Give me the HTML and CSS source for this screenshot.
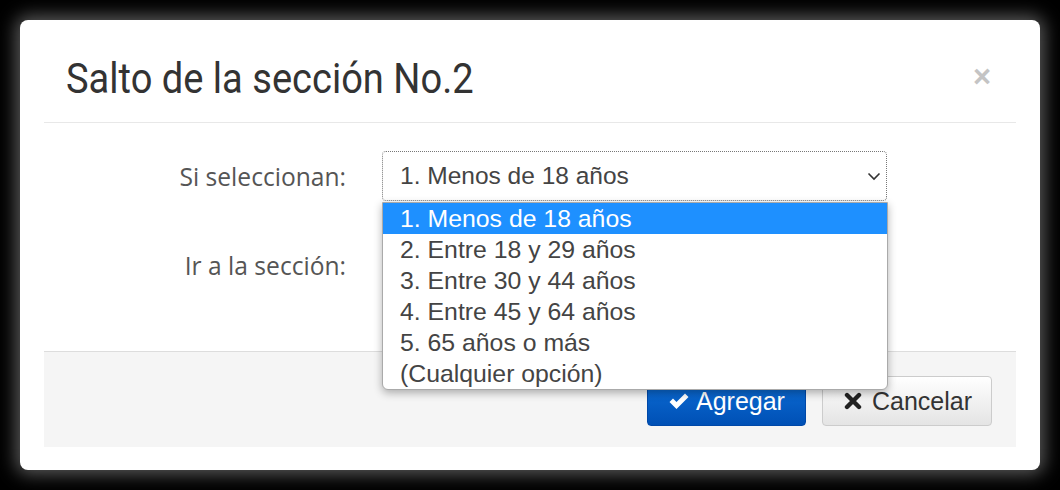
FILE: index.html
```html
<!DOCTYPE html>
<html>
	<head>
		<meta charset="UTF-8">
		<title>Salto de la sección</title>
		<link rel="stylesheet" href="styles.css">
	</head>
	<body>

		<div class="modal">

			<!--cabecera-->
			<div class="modal-header">
				<h4 class="modal-title"><span>Salto de la sección No.2</span></h4>
				<span class="close">&times;</span>
			</div>

			<!--formulario-->
			<div class="modal-body">
				<div class="form-row">
					<label class="form-label">Si seleccionan:</label>
					<div class="form-ctrl">
						<div class="select focused">
							<span>1. Menos de 18 años</span>
							<svg class="chev" width="14" height="10" viewBox="0 0 14 10"><path d="M1.5 2.5 L7 8 L12.5 2.5" fill="none" stroke="#333" stroke-width="1.6"/></svg>
						</div>

						<!--lista desplegada-->
						<ul class="options">
							<li class="active">1. Menos de 18 años</li>
							<li>2. Entre 18 y 29 años</li>
							<li>3. Entre 30 y 44 años</li>
							<li>4. Entre 45 y 64 años</li>
							<li>5. 65 años o más</li>
							<li>(Cualquier opción)</li>
						</ul>
					</div>
				</div>
				<div class="form-row">
					<label class="form-label">Ir a la sección:</label>
					<div class="form-ctrl">
						<!--queda debajo de la lista-->
						<div class="select"></div>
					</div>
				</div>
			</div>

			<!--botones-->
			<div class="modal-footer">
				<a class="btn btn-primary" href="javascript:;">
					<svg width="22" height="20" viewBox="0 0 22 20"><path d="M1.5 11 L5 7.5 L8.5 11 L17 2.5 L20.5 6 L8.5 18 Z" fill="#fff"/></svg>
					Agregar
				</a>
				<a class="btn btn-default" href="javascript:;">
					<svg width="18" height="18" viewBox="0 0 18 18"><path d="M3 3 L15 15 M15 3 L3 15" stroke="#222" stroke-width="4.4" stroke-linecap="round"/></svg>
					Cancelar
				</a>
			</div>

		</div>

	</body>
</html>
```

FILE: styles.css
```css
*{
	margin: 0;
	padding: 0;
	box-sizing: border-box;
}

body{
	background-color: #000;
	padding: 20px;
	width: 1060px;
	height: 490px;
	overflow: hidden;
}

.modal{
	background-color: #fff;
	border-radius: 8px;
	height: 450px;
	padding: 0 24px;
	box-shadow: 0 0 18px 4px rgba(255,255,255,0.36);
}

/*cabecera*/
.modal-header{
	height: 103px;
	border-bottom: 1px solid #e8e8e8;
	display: flex;
	align-items: center;
	justify-content: space-between;
	padding: 0 22px;
}

.modal-title{
	font-family: Roboto, sans-serif;
	font-weight: 400;
	font-size: 43px;
	color: #333;
	margin-top: 14px;
}

.modal-title span{
	display: inline-block;
	transform: scaleX(0.885);
	transform-origin: left center;
}

.close{
	font-family: "Liberation Sans", Arial, sans-serif;
	font-weight: bold;
	font-size: 31px;
	color: #c4c4c4;
	margin-top: 11px;
	margin-right: 3px;
}

/*formulario*/
.modal-body{
	height: 228px;
	padding-top: 28px;
}

.form-row{
	display: grid;
	grid-template-columns: 338px 505px;
	align-items: center;
	margin-bottom: 39px;
}

.form-label{
	text-align: right;
	padding-right: 36px;
	font-family: "Open Sans", sans-serif;
	font-size: 24.6px;
	color: #555;
}

.form-ctrl{
	position: relative;
}

.select{
	height: 50px;
	border: 1px solid #ccc;
	border-radius: 4px;
	display: flex;
	align-items: center;
	justify-content: space-between;
	padding: 0 5px 0 17px;
	font-family: "Liberation Sans", Arial, sans-serif;
	font-size: 24.5px;
	color: #444;
}

.select.focused{
	border: 1px dotted #777;
}

/*lista desplegada*/
.options{
	position: absolute;
	top: 51px;
	left: 0;
	width: 506px;
	list-style: none;
	background-color: #fff;
	border: 1px solid #aaa;
	border-radius: 0 0 6px 6px;
	box-shadow: 0 3px 8px rgba(0,0,0,0.3);
	overflow: hidden;
	z-index: 5;
}

.options li{
	height: 31px;
	line-height: 31px;
	padding-left: 17px;
	font-family: "Liberation Sans", Arial, sans-serif;
	font-size: 24.8px;
	color: #444;
}

.options li.active{
	background-color: #1e90ff;
	color: #fff;
}

/*botones*/
.modal-footer{
	height: 96px;
	background-color: #f5f5f5;
	border-top: 1px solid #ddd;
	display: flex;
	justify-content: flex-end;
	align-items: flex-start;
	gap: 16px;
	padding: 24px 24px 0 0;
}

.btn{
	height: 50px;
	display: flex;
	align-items: center;
	gap: 6px;
	border-radius: 4px;
	font-family: "Liberation Sans", Arial, sans-serif;
	font-size: 25px;
	text-decoration: none;
}

.btn-primary{
	width: 159px;
	padding-left: 20px;
	background: linear-gradient(#0d6fd8, #0050b5);
	border: 1px solid #0048a8;
	color: #fff;
}

.btn-default{
	width: 170px;
	padding-left: 21px;
	background: linear-gradient(#fff, #e4e4e4);
	border: 1px solid #ccc;
	color: #333;
	gap: 10px;
}
```
